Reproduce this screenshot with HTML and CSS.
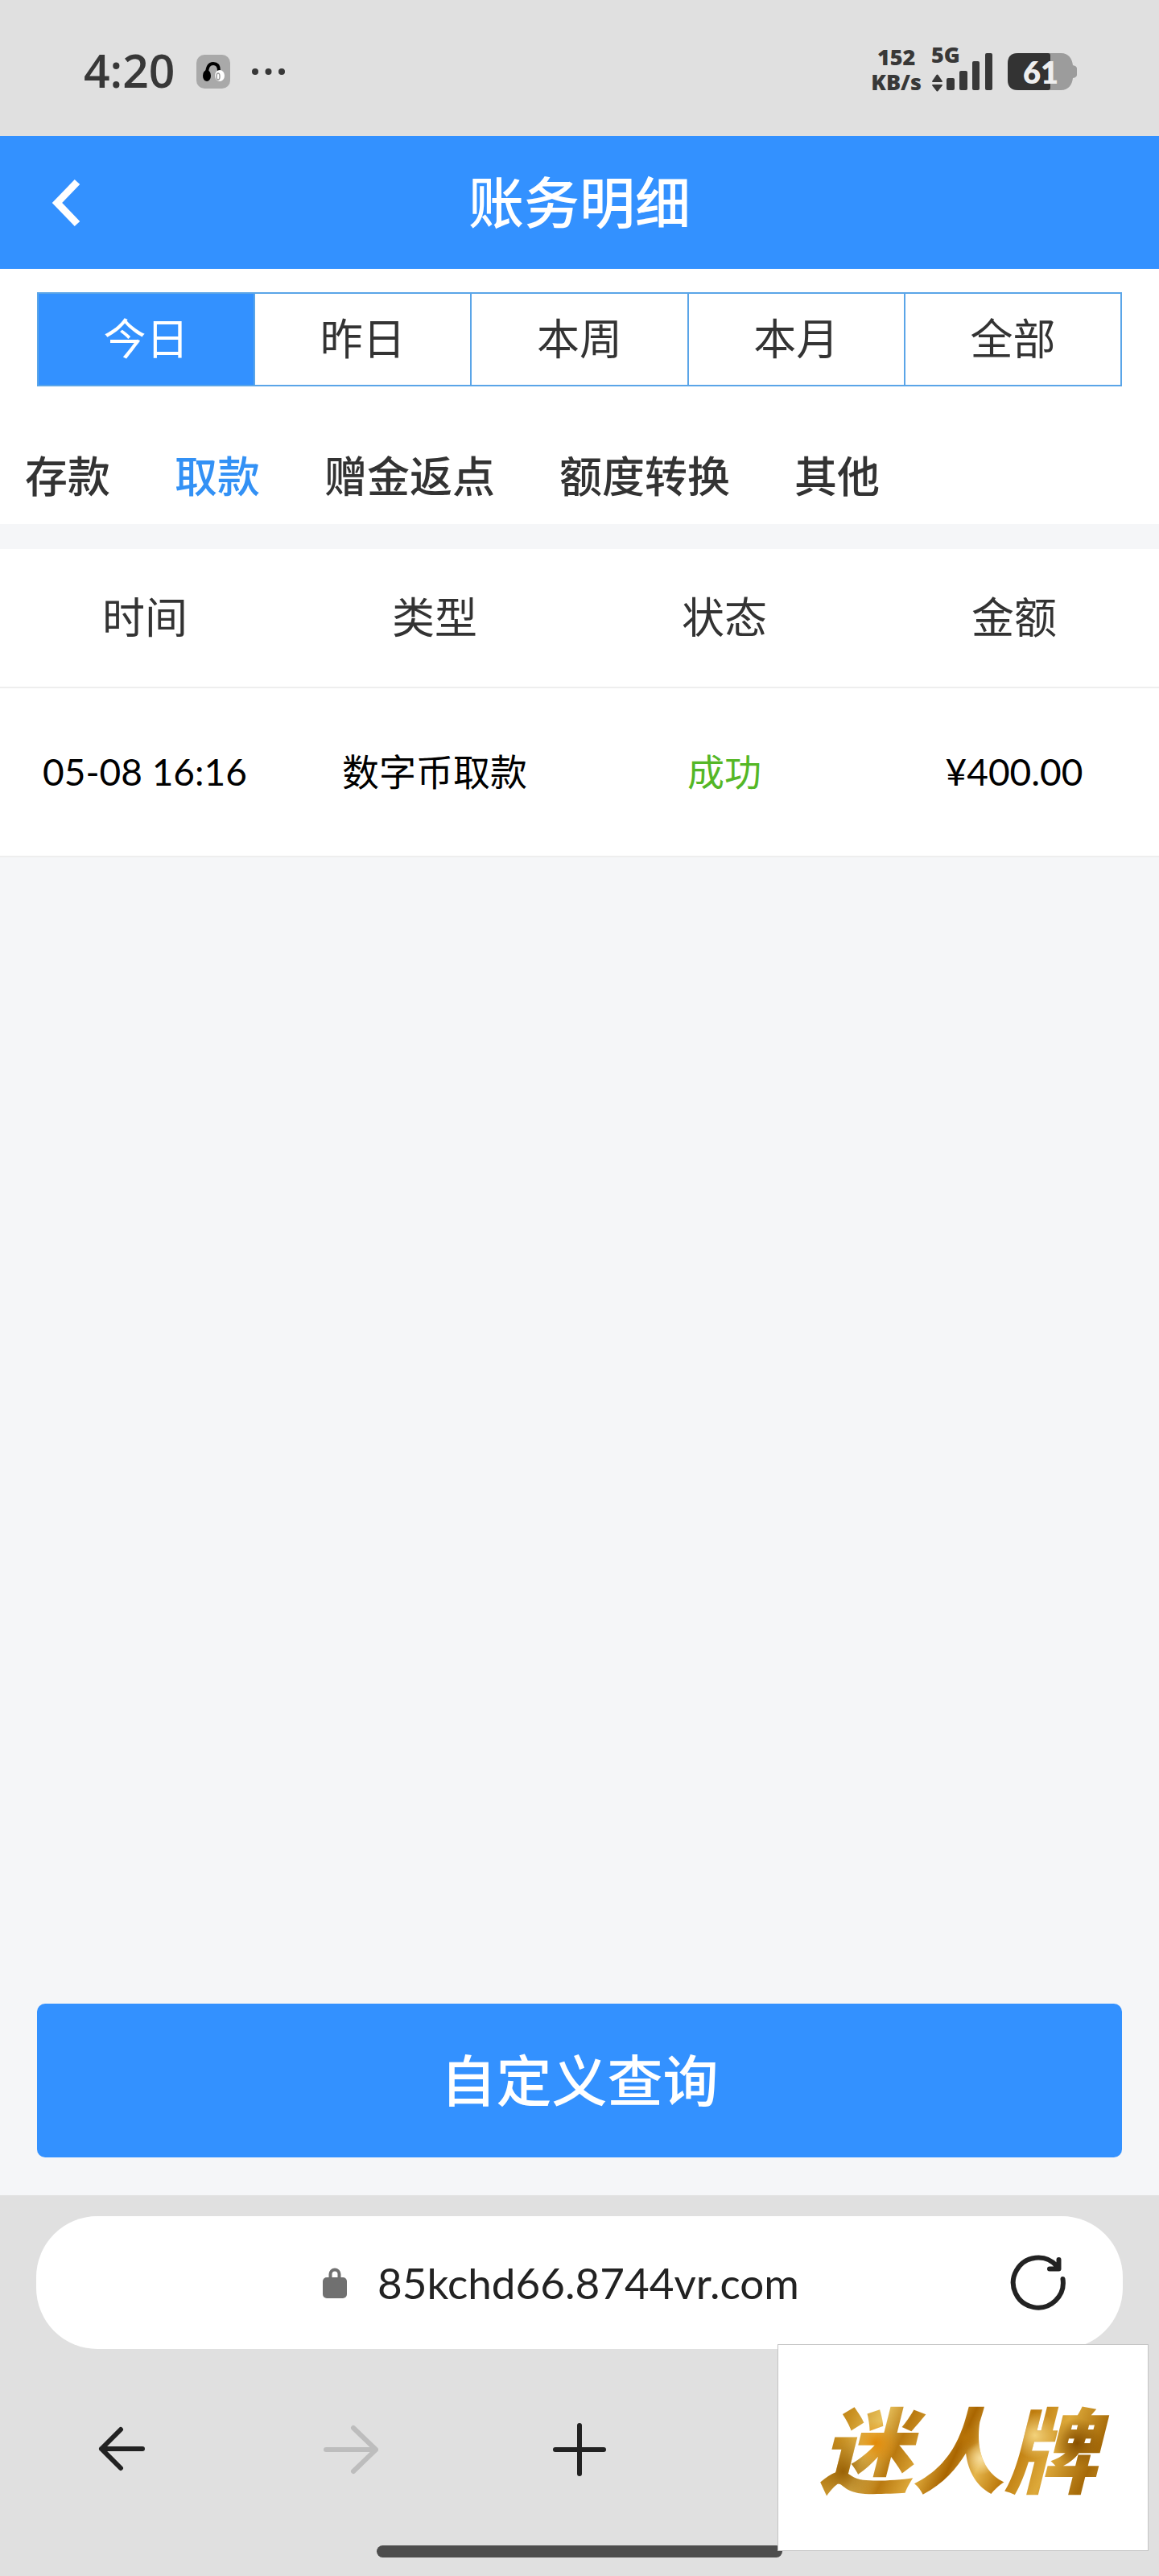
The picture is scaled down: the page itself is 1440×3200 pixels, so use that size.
FILE: index.html
```html
<!DOCTYPE html>
<html lang="zh-CN">
<head>
<meta charset="utf-8">
<meta name="viewport" content="width=device-width, initial-scale=1">
<title>账务明细</title>
<link rel="stylesheet" href="styles.css">
</head>
<body>
<div class="status-bar">
  <div class="status-left">
    <span class="clock">4:20</span>
    <svg class="app-icon" width="42" height="42" viewBox="0 0 42 42" aria-hidden="true">
      <rect width="42" height="42" rx="10" fill="#a9a9a9"/>
      <path d="M13 25C13 14 16 11 21 11S28 14 28 20" fill="none" stroke="#000" stroke-width="4"/>
      <ellipse cx="13" cy="26" rx="5" ry="7" fill="#000"/>
      <ellipse cx="29" cy="26" rx="6" ry="7" fill="#fff"/>
      <ellipse cx="27" cy="27" rx="2" ry="4" fill="none" stroke="#999" stroke-width="1.5"/>
    </svg>
    <svg class="more" width="42" height="8" viewBox="0 0 42 8" fill="#383838" aria-hidden="true">
      <circle cx="4" cy="4" r="4"/><circle cx="20.500" cy="4" r="4"/><circle cx="37" cy="4" r="4"/>
    </svg>
  </div>
  <div class="status-right">
    <div class="speed"><span>152</span><span>KB/s</span></div>
    <div class="signal">
      <span class="network">5G</span>
      <svg width="77" height="50" viewBox="0 0 77 50" fill="#383838" aria-hidden="true">
        <path d="M1 37 6.500 29Q7.500 28 8.500 29L14 37Q14 38 13 38H2Q1 38 1 37ZM1 42 6.500 49Q7.500 50 8.500 49L14 42Q14 41 13 41H2Q1 41 1 42Z"/>
        <rect x="19" y="33" width="10" height="15" rx="2"/><rect x="35" y="24" width="10" height="24" rx="2"/>
        <rect x="51" y="12" width="9" height="36" rx="2"/><rect x="67" y="2" width="9" height="46" rx="2"/>
      </svg>
    </div>
    <div class="battery">
      <svg width="87" height="48" viewBox="0 0 87 48" aria-hidden="true">
        <path d="M14 1H67C77 1 81 8 82 16Q87 17 87 20V28Q87 31 82 32C81 40 77 47 67 47H14Q1 47 1 34V14Q1 1 14 1Z" fill="#9c9c9c"/>
        <path d="M14 1H51Q54 1 54 4V44Q54 47 51 47H14Q1 47 1 34V14Q1 1 14 1Z" fill="#333"/>
      </svg>
      <span class="battery-level">61</span>
    </div>
  </div>
</div>

<header class="page-header">
  <button class="back" type="button" aria-label="返回">
    <svg width="36" height="60" viewBox="0 0 36 60" fill="none" stroke="#fff" stroke-width="9"><path d="M32 4 7 30 32 56"/></svg>
  </button>
  <h1>账务明细</h1>
</header>

<section class="filters">
  <div class="ranges">
    <button type="button" class="range active">今日</button>
    <button type="button" class="range">昨日</button>
    <button type="button" class="range">本周</button>
    <button type="button" class="range">本月</button>
    <button type="button" class="range">全部</button>
  </div>
  <nav class="categories">
    <a href="#deposit">存款</a>
    <a href="#withdraw" class="current">取款</a>
    <a href="#bonus">赠金返点</a>
    <a href="#transfer">额度转换</a>
    <a href="#other">其他</a>
  </nav>
</section>

<main>
  <table class="records">
    <thead><tr><th>时间</th><th>类型</th><th>状态</th><th>金额</th></tr></thead>
    <tbody><tr><td>05-08 16:16</td><td>数字币取款</td><td class="success">成功</td><td>¥400.00</td></tr></tbody>
  </table>
  <button class="query" type="button">自定义查询</button>
</main>

<footer class="browser">
  <div class="address-bar">
    <label class="address">
      <svg width="30" height="38" viewBox="0 0 30 38" role="img" aria-label="网址">
        <path d="M9.500 14V8a5.500 5.500 0 0 1 11 0V14" fill="none" stroke="#707070" stroke-width="4"/>
        <rect y="12" width="30" height="26" rx="5" fill="#707070"/>
      </svg>
      <input type="text" value="85kchd66.8744vr.com">
    </label>
    <button type="button" class="reload" aria-label="刷新">
      <svg width="70" height="70" viewBox="0 0 70 70" fill="none" stroke="#222" stroke-width="6" stroke-linecap="round" stroke-linejoin="round">
        <path d="M65.500 30A31 31 0 1 1 58 14M60.500 6V17.500H49"/>
      </svg>
    </button>
  </div>
  <nav class="toolbar">
    <button type="button" aria-label="后退">
      <svg width="68" height="68" viewBox="0 0 68 68" fill="none" stroke="#222" stroke-width="6" stroke-linecap="round" stroke-linejoin="round"><path d="M60 33H9M33 9 9 33 33 57"/></svg>
    </button>
    <button type="button" aria-label="前进" disabled>
      <svg width="68" height="68" viewBox="0 0 68 68" fill="none" stroke="#bdbdbd" stroke-width="6" stroke-linecap="round" stroke-linejoin="round"><path d="M3 34H65M37 7 65 34 37 61"/></svg>
    </button>
    <button type="button" aria-label="新标签页">
      <svg width="68" height="68" viewBox="0 0 68 68" fill="none" stroke="#222" stroke-width="6" stroke-linecap="round"><path d="M4 34H64M34 4V64"/></svg>
    </button>
    <span></span>
    <span></span>
  </nav>
  <div class="home-indicator"></div>
  <div class="brand"><span>迷人牌</span></div>
</footer>
</body>
</html>
```
FILE: styles.css
```css
* { box-sizing: border-box; }
body {
  margin: 0;
  min-height: 100vh;
  display: flex;
  flex-direction: column;
  background: #f5f6f8;
  color: #333;
  font-family: Lato, "Noto Sans CJK SC", sans-serif;
}
button {
  border: 0;
  padding: 0;
  margin: 0;
  background: none;
  color: inherit;
  font: inherit;
}
svg { display: block; flex: none; }

.status-bar {
  height: 169px;
  padding: 8px 102px 0 104px;
  display: flex;
  justify-content: space-between;
  align-items: center;
  background: #e0e0e0;
  color: #383838;
  font-family: "Open Sans", sans-serif;
}
.status-left { display: flex; align-items: center; gap: 27px; }
.clock { padding-bottom: 4px; font-size: 57px; line-height: 64px; font-weight: 600; }
.status-right { display: flex; align-items: center; gap: 12px; }
.speed {
  display: flex;
  flex-direction: column;
  align-items: center;
  padding-bottom: 6px;
  font-size: 27px;
  line-height: 31px;
  font-weight: 800;
}
.signal { position: relative; }
.network {
  position: absolute;
  left: 0;
  top: -12px;
  font-size: 27px;
  line-height: 31px;
  font-weight: 800;
}
.battery { position: relative; margin-left: 5px; }
.battery-level {
  position: absolute;
  left: 20px;
  top: 0;
  font-size: 38px;
  line-height: 48px;
  font-weight: 800;
  color: #eee;
  font-family: Lato, sans-serif;
}

.page-header {
  height: 165px;
  padding: 0 64px;
  display: grid;
  grid-template-columns: 1fr auto 1fr;
  align-items: center;
  background: #3391ff;
  color: #fff;
}
.back { justify-self: start; }
h1 {
  margin: 0;
  padding-bottom: 8px;
  font-family: "Noto Sans CJK SC", sans-serif;
  font-size: 69px;
  line-height: 80px;
  font-weight: 500;
}

.filters {
  padding-top: 29px;
  background: #fff;
  font-family: "Noto Sans CJK SC", sans-serif;
}
.ranges {
  display: flex;
  height: 117px;
  margin: 0 46px;
  border: 2px solid #5aa5e8;
}
.range { flex: 1; font-size: 53px; line-height: 64px; padding-bottom: 8px; }
.range + .range { border-left: 2px solid #5aa5e8; }
.range.active { background: #3391ff; color: #fff; }
.categories {
  display: flex;
  gap: 80px;
  padding: 77px 31px 30px;
  font-size: 53px;
  line-height: 64px;
  font-weight: 500;
}
.categories a { color: inherit; text-decoration: none; }
.categories .current { color: #3391f5; }

main { flex: 1; display: flex; flex-direction: column; padding-top: 31px; }
.records {
  width: 100%;
  table-layout: fixed;
  border-collapse: collapse;
  background: #fff;
  text-align: center;
}
th, td { padding: 0; border-bottom: 2px solid #eee; line-height: 64px; }
th {
  height: 172px;
  padding-bottom: 8px;
  font-family: "Noto Sans CJK SC", sans-serif;
  font-size: 53px;
  font-weight: 400;
}
td { height: 210px; font-size: 46px; color: #000; }
td.success { color: #54b726; }
.query {
  height: 191px;
  margin: auto 46px 47px;
  padding-bottom: 8px;
  border-radius: 10px;
  background: #3391ff;
  color: #fff;
  font-family: "Noto Sans CJK SC", sans-serif;
  font-size: 69px;
  line-height: 80px;
  font-weight: 500;
}

.browser {
  position: relative;
  padding: 26px 45px 23px;
  background: #e0e0e0;
}
.address-bar {
  display: flex;
  align-items: center;
  height: 165px;
  padding: 0 70px 0 102px;
  border-radius: 76px;
  background: #fff;
}
.address {
  flex: 1;
  display: flex;
  align-items: center;
  justify-content: center;
  gap: 38px;
}
.address input {
  width: 540px;
  margin-right: -8px;
  border: 0;
  padding: 0;
  background: none;
  color: #222;
  font-family: inherit;
  font-size: 53px;
  line-height: 64px;
}
.toolbar {
  display: grid;
  grid-template-columns: repeat(5, 1fr);
  justify-items: center;
  margin: 91px -36px 85px;
}
.home-indicator {
  width: 35vw;
  height: 15px;
  margin: 0 auto;
  border-radius: 8px;
  background: #4d4d4d;
}
.brand {
  position: absolute;
  right: 13px;
  bottom: 31px;
  width: 461px;
  height: 257px;
  padding-bottom: 6px;
  display: flex;
  align-items: center;
  justify-content: center;
  border: 1px solid #c4c4c4;
  background: #fff;
}
.brand span {
  padding: 0 20px 0 8px;
  font-family: "Noto Sans CJK SC", sans-serif;
  font-size: 115px;
  line-height: 160px;
  font-weight: 900;
  font-style: italic;
  color: transparent;
  background:
    radial-gradient(circle at 21% 48%, #e28a08 0, transparent 9%),
    radial-gradient(circle at 10% 70%, #9a6206 0, transparent 12%),
    radial-gradient(circle at 51% 44%, #b87408 0, transparent 8%),
    radial-gradient(circle at 56% 60%, #f8dfa0 0, transparent 9%),
    radial-gradient(circle at 88% 48%, #875000 0, transparent 9%),
    radial-gradient(circle at 74% 42%, #f3d27b 0, transparent 10%),
    linear-gradient(115deg, #a86b08 5%, #c99021 15%, #e8c25e 24%, #b97910 32%, #e0ac3d 41%, #a96500 49%, #e5b64c 57%, #bd7a0c 65%, #dda93a 76%, #a66a08 88%, #d9a338);
  -webkit-background-clip: text;
  background-clip: text;
}
```
